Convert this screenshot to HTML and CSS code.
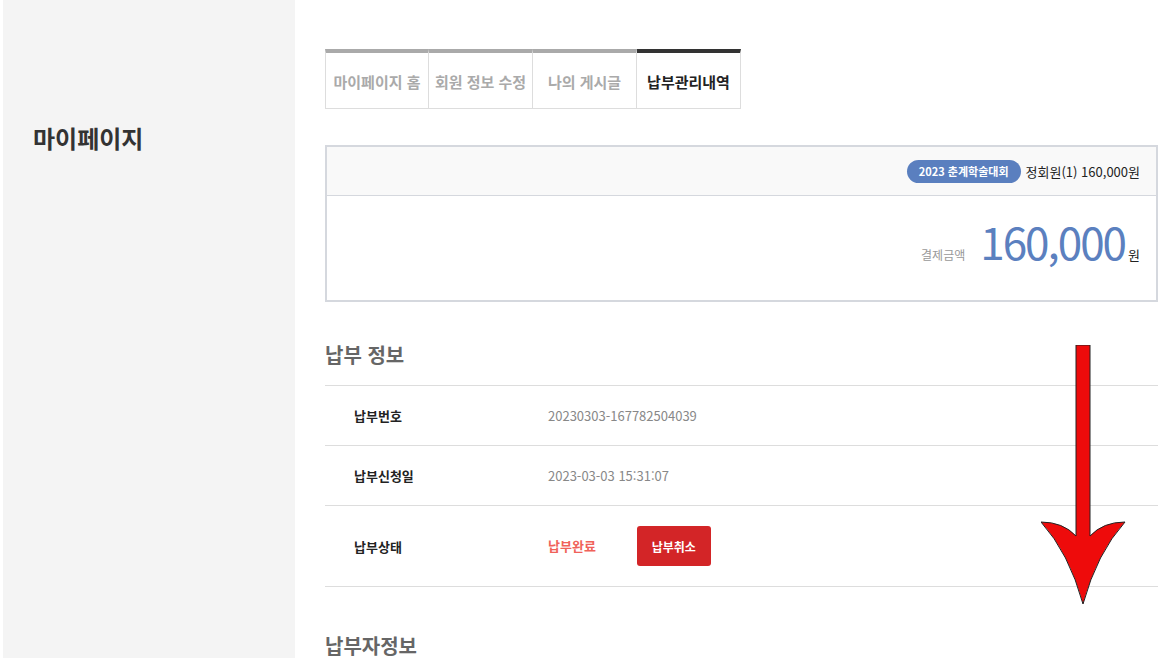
FILE: index.html
```html
<!DOCTYPE html>
<html lang="ko">

<head>
    <meta charset="UTF-8">
    <meta name="viewport" content="width=device-width, initial-scale=1.0">
    <title>마이페이지 - 납부관리내역</title>
    <link rel="stylesheet" href="styles.css">
</head>

<body>
    <div class="wrap">
        <!-- 왼쪽 메뉴 -->
        <div class="side">
            <h2 class="stit">마이페이지</h2>
        </div>

        <!-- 본문 -->
        <div class="cont">
            <ul class="tabs">
                <li>마이페이지 홈</li>
                <li>회원 정보 수정</li>
                <li>나의 게시글</li>
                <li class="on">납부관리내역</li>
            </ul>

            <div class="paybox">
                <div class="phead">
                    <span class="badge">2023 춘계학술대회</span>
                    <span class="ptxt">정회원(1) 160,000원</span>
                </div>
                <div class="pbody">
                    <span class="plabel">결제금액</span>
                    <strong class="pnum">160,000</strong>
                    <span class="punit">원</span>
                </div>
            </div>

            <h3 class="tit">납부 정보</h3>
            <ul class="info">
                <li>
                    <span class="lb">납부번호</span>
                    <span class="val">20230303-167782504039</span>
                </li>
                <li>
                    <span class="lb">납부신청일</span>
                    <span class="val">2023-03-03 15:31:07</span>
                </li>
                <li class="stat">
                    <span class="lb">납부상태</span>
                    <span class="val done">납부완료</span>
                    <button class="btn">납부취소</button>
                </li>
            </ul>

            <h3 class="tit tit2">납부자정보</h3>
        </div>
    </div>

    <!-- 빨간 화살표 -->
    <svg class="arrow" viewBox="0 0 90 262">
        <path d="M35,0 H49 V191 Q62,177 84,177 Q56,208 42,259 Q28,208 0,177 Q22,177 35,191 Z"></path>
    </svg>
</body>

</html>
```

FILE: styles.css
```css
html,
body {
    margin: 0;
    padding: 0;
}

body {
    font-family: "Noto Sans CJK KR", "Noto Sans", sans-serif;
    color: #222;
    background-color: #fff;
    overflow: hidden;
}

ul {
    margin: 0;
    padding: 0;
    list-style: none;
}

.wrap {
    display: flex;
    min-height: 658px;
}

/* 왼쪽 메뉴 */
.side {
    width: 292px;
    margin-left: 3px;
    background-color: #f4f4f4;
}

.stit {
    margin: 0;
    padding: 120px 0 0 30px;
    font-size: 24px;
    font-weight: 700;
    line-height: 36px;
    color: #333;
}

/* 본문 */
.cont {
    width: 833px;
    margin-left: 30px;
    padding-top: 49px;
}

/* 탭메뉴 */
.tabs {
    display: flex;
}

.tabs li {
    width: 103px;
    height: 55px;
    border-top: 4px solid #aaa;
    border-right: 1px solid #ddd;
    border-bottom: 1px solid #ddd;
    font-size: 15px;
    font-weight: 700;
    line-height: 58px;
    text-align: center;
    white-space: nowrap;
    color: #aaa;
}

.tabs li:first-child {
    width: 102px;
    border-left: 1px solid #ddd;
}

.tabs li.on {
    border-top-color: #333;
    color: #222;
}

/* 결제박스 */
.paybox {
    margin-top: 36px;
    border: 2px solid #d5d8de;
}

.phead {
    display: flex;
    justify-content: flex-end;
    align-items: center;
    height: 48px;
    padding-right: 16px;
    background-color: #f9f9f9;
    border-bottom: 1px solid #d5d8de;
}

.badge {
    display: inline-block;
    padding: 0 12px;
    height: 23px;
    line-height: 23px;
    border-radius: 12px;
    background-color: #5a7fbf;
    color: #fff;
    font-size: 11px;
    font-weight: 700;
}

.ptxt {
    margin-left: 5px;
    font-size: 13px;
}

.pbody {
    display: flex;
    justify-content: flex-end;
    align-items: baseline;
    height: 104px;
    padding-right: 16px;
    box-sizing: border-box;
    padding-top: 15px;
}

.plabel {
    font-size: 12px;
    color: #999;
    margin-right: 15px;
}

.pnum {
    font-size: 44px;
    font-weight: 400;
    letter-spacing: -2px;
    color: #5b80bf;
    line-height: 60px;
}

.punit {
    font-size: 13px;
    margin-left: 3px;
}

/* 납부 정보 */
.tit {
    margin: 0;
    padding-top: 38px;
    height: 45px;
    font-size: 20px;
    font-weight: 700;
    line-height: 30px;
    color: #666;
    border-bottom: 1px solid #ddd;
    box-sizing: content-box;
}

.tit2 {
    padding-top: 44px;
    border-bottom: 0;
}

.info li {
    display: flex;
    align-items: center;
    height: 59px;
    border-bottom: 1px solid #ddd;
    font-size: 13px;
}

.info li.stat {
    height: 80px;
}

.lb {
    width: 194px;
    padding-left: 29px;
    font-weight: 700;
    color: #222;
}

.val {
    color: #888;
}

.val.done {
    color: #f0625a;
    font-weight: 700;
    margin-top: -2px;
}

.btn {
    margin-left: 41px;
    width: 74px;
    height: 40px;
    border: 0;
    border-radius: 3px;
    background-color: #d32527;
    color: #fff;
    font-family: inherit;
    font-size: 12px;
    font-weight: 700;
}

/* 화살표 */
.arrow {
    position: absolute;
    left: 1041px;
    top: 345px;
    width: 90px;
    height: 262px;
}

.arrow path {
    fill: #ee0b0b;
    stroke: #222;
    stroke-width: 1;
}
```
